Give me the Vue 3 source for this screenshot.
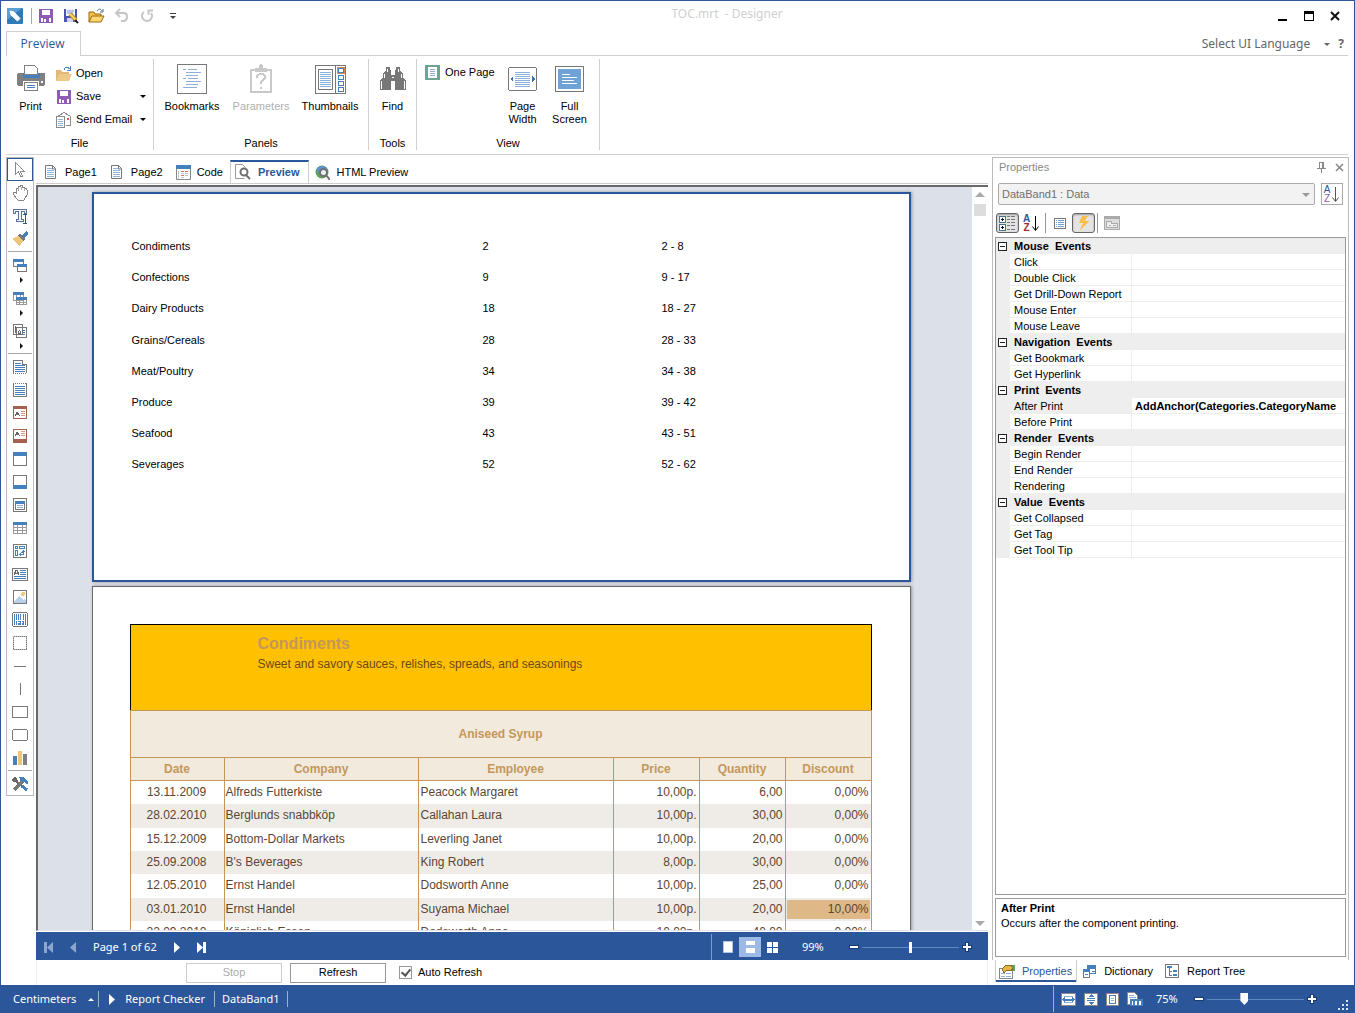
<script setup>
import { ref } from 'vue'

const icons = {
  app: '<rect width="16" height="16" rx="1" fill="#2f7bb8"/><path d="M0 1q0-1 1-1h14L0 12z" fill="#5a9fd4"/><path d="M3 3l4 1 6 6.500-2.500 2.500L4 7z" fill="#fff" stroke="#fff" stroke-linejoin="round"/>',
  save: '<path d="M1 1h14v14H1z" fill="#8e5bb5"/><path d="M4 2h8v5H4z" fill="#fff"/><path d="M3 10h10v4H3z" fill="#fff"/><path d="M5 10h6v4H5z" fill="#8e5bb5"/><path d="M6 11h2v3H6z" fill="#fff"/>',
  saveAs: '<path d="M1 1h13v13H1z" fill="#4b53b8"/><path d="M3 1h9v7H3z" fill="#eef2ff"/><path d="M4 3h7M4 5h6" stroke="#8b94c9"/><path d="M4 10h6v4H4z" fill="#cfd4ee"/><path d="M7 6l6 6" stroke="#b58a1c" stroke-width="4"/><path d="M7 6l6 6" stroke="#ffd75a" stroke-width="2"/><path d="M12 12l3 3" stroke="#222" stroke-width="2"/>',
  openGold: '<path d="M1 14V4h5l1 2h6v3" fill="#f3c14c" stroke="#9a6b14"/><path d="M1 14l3-6h12l-3 6z" fill="#ffd874" stroke="#9a6b14"/><path d="M9 3c2-3 4-2 5 0M15 1v3h-3" fill="none" stroke="#4a6f96"/>',
  open: '<path d="M0 15V4h5l1 2h7v3H4z" fill="#e0b878"/><path d="M3 8h13l-3 7H0z" fill="#edc987"/><path d="M8 3.500C9 .5 12 .5 13.500 3M14.500 0v4h-4" fill="none" stroke="#4a83bd"/>',
  undo: '<path d="M6 1L2 5l4 4M2 5h8c4 0 4 7 0 8H7" fill="none" stroke="#c6c6c6" stroke-width="2"/>',
  redo: '<path d="M5 4a5 5 0 1 0 7 1M14 2.500H9.500V7" fill="none" stroke="#c6c6c6" stroke-width="2"/>',
  email: '<path d="M1.500 15.500v-11L8 .5l6.500 4v9h-5" fill="#fff" stroke="#8a8a8a"/><path d="M.5 4.500h8v11h-8z" fill="#fff" stroke="#8a8a8a"/><path d="M2 7.500h5M2 9.500h5M2 11.500h5M2 13.500h5" stroke="#8fb4dc"/><path d="M11 6h2v2h-2z" fill="#e0583a"/>',
  print: '<path d="M0 10q0-2 2-2h24q2 0 2 2v9l-1 2H1l-1-2z" fill="#808080"/><path d="M6 8h17v5H6z" fill="#4580bc"/><path d="M7.500.500h10l3 3v6h-13z" fill="#fff" stroke="#808080"/><path d="M6 16h16v5H6z" fill="#fff"/><path d="M7.500 17.500h13v8h-13z" fill="#fff" stroke="#808080"/><path d="M10 20.500h8M10 22.500h8" stroke="#4580bc"/><path d="M24 16h2v2h-2z" fill="#fff"/>',
  bookmarks: '<path d="M.5.500h29v29H.500z" fill="#fff" stroke="#777"/><path d="M6 5.500h3M9 8.500h15M9 11.500h12M6 14.500h3M9 17.500h15M9 20.500h12M6 23.500h14M11 5.500h9M11 14.500h10" stroke="#8fb0da"/>',
  parameters: '<path d="M4 5h22v24H4z" fill="#c9c9c9"/><path d="M6 7h18v20H6z" fill="#fff"/><path d="M9 4h4q0-4 2-4t2 4h4v4H9z" fill="#c9c9c9"/><path d="M11 14q0-4 4-4t4 3q0 2-2 3t-2 4M15 23v2" fill="none" stroke="#c9c9c9" stroke-width="2"/>',
  thumbnails: '<path d="M.5.500h30v28H.500z" fill="#fff" stroke="#777"/><path d="M20.500 0v29M3.500 4.500h14v20h-14z" fill="none" stroke="#777"/><path d="M5 7.500h11M5 9.500h11M5 11.500h11M5 13.500h11M5 15.500h11M5 17.500h11M5 19.500h11M5 21.500h11" stroke="#8fb0da"/><path d="M23.500 3.500h5v4h-5zM23.500 10.500h5v4h-5zM23.500 16.500h5v4h-5zM23.500 22.500h5v4h-5z" fill="#fff" stroke="#4580bc"/><path d="M22.500 2.500h7v6h-7z" fill="none" stroke="#e08a4a"/>',
  find: '<path d="M6 1h4v3h1v5h4V4h1V1h4v3l3 4v4l3 2v10H15v-9h-4v9H0V14l3-2V8l3-4z" fill="#777"/><path d="M1.500 15v8M24.500 15v8M4.500 8v4M21.500 8v4M12 11.500h2M7.500 3v3M18.500 3v3" stroke="#fff"/>',
  onePage: '<rect width="15" height="15" rx="1" fill="#6fa393"/><path d="M3 2h9v11H3z" fill="#fff"/><path d="M5 4.500h5M5 6.500h5M5 8.500h5M5 10.500h5" stroke="#8fb0da"/>',
  pageWidth: '<rect x=".5" y=".5" width="28" height="23" rx="2" fill="#fff" stroke="#777"/><path d="M7 5.500h15M7 7.500h15M7 9.500h15M7 11.500h15M7 13.500h15M7 15.500h15M7 17.500h15M7 19.500h15" stroke="#8fb0da"/><path d="M5 9v6l-3-3zM24 9v6l3-3z" fill="#3a73b5"/>',
  fullScreen: '<path d="M.5.500h28v25H.500z" fill="#fff" stroke="#777"/><path d="M3 3h23v20H3z" fill="#6fa3d8"/><path d="M7 8.500h8M7 11.500h15M7 14.500h12M7 17.500h15" stroke="#fff"/>',
  page: '<path d="M.5.500h7l3 3v10H.500z" fill="#fff" stroke="#777"/><path d="M7.500 0v4h3" fill="none" stroke="#777"/><path d="M2 3.500h5M2 5.500h7M2 7.500h7M2 9.500h7M2 11.500h7" stroke="#8fb4dc"/>',
  code: '<path d="M.5.500h14v14H.500z" fill="#fff" stroke="#888"/><path d="M0 0h15v4H0z" fill="#4580bc"/><path d="M5 6.500h3M9 6.500h3M5 10.500h3" stroke="#e07050"/><path d="M5 8.500h3M9 10.500h3M5 12.500h3M9 8.500h3" stroke="#b9c7d8"/><path d="M2.500 6v8" stroke="#b9c7d8"/>',
  preview: '<path d="M9.500 14.500h-9V.5h7l3 3" fill="none" stroke="#999"/><circle cx="9" cy="8" r="3.500" fill="#fff" stroke="#707070" stroke-width="2"/><path d="M11 11l4 4" stroke="#707070" stroke-width="2"/>',
  html: '<circle cx="7" cy="7" r="6.500" fill="#5fa05a"/><path d="M2 3q5-4 10 0l1 4-5 3q-4-4-6-3z" fill="#5b93cf"/><circle cx="8.500" cy="7.500" r="3.500" fill="#eaf3fb" stroke="#707070" stroke-width="2"/><path d="M11 10l4 5" stroke="#707070" stroke-width="2"/>',
  cursor: '<path d="M3.500.500v12l3-3 2 5h2l-2-5h4z" fill="#fff" stroke="#888"/>',
  hand: '<path d="M5 14L1 9V7h2l1 1V3h2V1h2V0h2v2h2v1h2l1 2v5l-3 5H6z" fill="#fff" stroke="#888"/><path d="M6.500 3v3M9.500 2v3M12.500 3v3" stroke="#aaa"/>',
  text: '<path d="M1 1h13v4h-2V3H9v8h2v2H4v-2h2V3H3v2H1z" fill="#eef3fa" stroke="#5a7396"/><path d="M11 6.500h4M13.500 6v9M11 15.500h4" stroke="#33558a" fill="none"/>',
  brush: '<path d="M0 8l6-3 5 5-3 5z" fill="#edc678"/><path d="M6 4l2-1 5 5-1 3z" fill="#777"/><path d="M10 4l4-4 2 1v2l-4 4z" fill="#4580bc"/>',
  windows: '<path d="M1.500 2.500h10v7h-10zM5.500 7.500h9v7h-9z" fill="#fff" stroke="#777"/><path d="M1 2h11v3H1zM5 7h10v3H5z" fill="#4580bc"/>',
  grids: '<path d="M1.500 2.500h10v8h-10zM4.500 7.500h10v7h-10z" fill="#fff" stroke="#999"/><path d="M1 2h11v3H1zM4 7h11v3H4z" fill="#4580bc"/><path d="M7.500 10v4M11.500 10v4M4 12.500h10M4.500 5v2M8.500 5v2" stroke="#999"/>',
  copies: '<path d="M1.500 1.500h9v10h-9zM4.500 4.500h10v10h-10z" fill="#fff" stroke="#777"/><path d="M6.500 12V8.500l1-1 1 1V12M6 10.500h3M3.500 3v7" fill="none" stroke="#666"/><path d="M10 7.500h3M10 9.500h3M10 11.500h3" stroke="#4580bc"/>',
  reportTitle: '<path d="M1.500 14V1.500h9l4 4V14" fill="#fff" stroke="#777"/><path d="M3 4h6v1H3zM3 6h10v1H3zM3 8h10v1H3zM3 10h10v1H3zM3 12h10v1H3z" fill="#4580bc"/><path d="M10.500 1v4.500h4" fill="#fff" stroke="#777"/><path d="M1 14.500h14" stroke="#777" stroke-dasharray="1 1"/>',
  reportSummary: '<path d="M1.500 1v13.500h13V1" fill="#fff" stroke="#777"/><path d="M3 4.500h10M3 6.500h10M3 8.500h10M3 10.500h10M3 12.500h10" stroke="#4580bc"/><path d="M1 1.500h14" stroke="#777" stroke-dasharray="1 1"/>',
  headerA: '<path d="M1.500 1.500h13v12h-13z" fill="#fff" stroke="#a5604f"/><path d="M1 1h14v3H1z" fill="#a5604f"/><path d="M3 11l2-4 3 4M4 9.500h3" fill="none" stroke="#666"/><path d="M9 6.500h4M9 8.500h4M9 10.500h4" stroke="#d9998b"/>',
  footerA: '<path d="M1.500 1.500h13v12h-13z" fill="#fff" stroke="#a5604f"/><path d="M1 11h14v4H1z" fill="#a5604f"/><path d="M3 8l2-4 3 4M4 6.500h3" fill="none" stroke="#666"/><path d="M9 3.500h4M9 5.500h4M9 7.500h4" stroke="#d9998b"/>',
  header: '<path d="M1.500 1.500h13v13h-13z" fill="#fff" stroke="#777"/><path d="M1 1h14v4H1z" fill="#4580bc"/>',
  footer: '<path d="M1.500 1.500h13v13h-13z" fill="#fff" stroke="#777"/><path d="M1 11h14v4H1z" fill="#4580bc"/>',
  dataBand: '<path d="M1.500 1.500h13v13h-13z" fill="#fff" stroke="#777"/><path d="M3.500 4.500h9v8h-9z" fill="#fff" stroke="#777"/><path d="M3 4h10v3H3z" fill="#4580bc"/><path d="M5 8.500h6M5 10.500h6" stroke="#8fb0da"/>',
  table: '<path d="M1.500 2.500h13v11h-13zM5.500 3v11M10.500 3v11M1 7.500h13M1 10.500h13" fill="#fff" stroke="#999"/><path d="M1 2h14v3H1z" fill="#4580bc"/>',
  crossTab: '<path d="M1.500 1.500h13v13h-13z" fill="#fff" stroke="#777"/><path d="M3.500 3.500h2v2h-2zM7.500 3.500h5v2h-5zM3.500 7.500h2v5h-2zM8 11.500h3.500V8M10 9.500l1.500-2 2 2M9.500 9.500l-2 2 2 2" fill="none" stroke="#4580bc"/>',
  richText: '<path d="M.5 2.500h15v12H.5z" fill="#fff" stroke="#777"/><path d="M2 9l2-5h1l2 5M3 7.500h3" fill="none" stroke="#666"/><path d="M8 4.500h6M8 6.500h6M8 8.500h6M2 10.500h12M2 12.500h12" stroke="#4580bc"/>',
  image: '<path d="M1.500 1.500h13v13h-13z" fill="#fff" stroke="#777"/><path d="M2 14v-2l5-5 4 4 1-1 2 2v2z" fill="#b9cfea"/><circle cx="11" cy="5" r="2" fill="#f0c878"/>',
  barcode: '<rect x=".5" y=".5" width="15" height="14" rx="2" fill="#fff" stroke="#777"/><path d="M2.500 2v11M4.500 2v6M6.500 2v6M8.500 2v6M11.500 2v6M13.500 2v11" stroke="#4580bc"/><path d="M4.500 9v4M6 9.500h2.500v1.500H6.500v1.500H9M10 9.500h1.500v3H10M10 11h2" fill="none" stroke="#4580bc"/>',
  panel: '<path d="M1.500 1.500h13v13h-13z" fill="#fff" stroke="#bbb"/><path d="M1.500 1.500h13v13h-13z" fill="none" stroke="#777" stroke-dasharray="1 1"/>',
  hline: '<path d="M2 8.500h12" stroke="#777"/>',
  vline: '<path d="M8.500 2v12" stroke="#777"/>',
  rect: '<path d="M.5 2.500h15v11H.5z" fill="#fff" stroke="#777"/>',
  roundRect: '<rect x=".5" y="2.500" width="15" height="11" rx="2" fill="#fff" stroke="#777"/>',
  chart: '<path d="M1 6h4v9H1z" fill="#4580bc"/><path d="M6 1h4v14H6z" fill="#edc678"/><path d="M11 4h4v11h-4z" fill="#808080"/>',
  tools: '<path d="M2 3l12 11" stroke="#666" stroke-width="2"/><path d="M2 14L11 5" stroke="#777" stroke-width="3"/><path d="M7 1h5l4 5v2h-2l-2-3-3 1z" fill="#4580bc"/><path d="M10 10l5 4" stroke="#4580bc" stroke-width="3"/><path d="M0 3l2-2 3 1 1 3-2 1H1z" fill="#666"/>',
  sort: '<path d="M4.500 1v14M1.500 11.500l3 4 3-4" fill="none" stroke="currentColor"/>',
  pin: '<path d="M2.500 0v6M2 .5h5M0 6.500h9M4.500 7v4" stroke="#888" fill="none"/><path d="M5 0h2v6H5z" fill="#888"/>',
  closeSmall: '<path d="M1 1l7 7M8 1L1 8" stroke="#888" stroke-width="1.500"/>',
  categories: '<path d="M.5 1.500h6v6h-6zM.5 9.500h6v6h-6z" fill="#fff" stroke="#4d6f9c"/><path d="M2 4.500h3M3.500 3v3M2 12.500h3M3.500 11v3" stroke="#111"/><path d="M8 1.500h3M12 1.500h4M8 4.500h3M12 4.500h4M8 7.500h3M12 7.500h4M8 10.500h3M12 10.500h4M8 14.500h3M12 14.500h4" stroke="#777"/>',
  list: '<path d="M.5.500h11v10H.500z" fill="#fff" stroke="#777"/><path d="M2 2.500h1M2 4.500h1M2 6.500h1M2 8.500h1M4 2.500h6M4 4.500h6M4 6.500h6M4 8.500h6" stroke="#6fa3d8"/>',
  bolt: '<path d="M6 0h6L9 5h4L4 14l3-7H3z" fill="#f9c04e"/>',
  form: '<path d="M.5.500h15v13H.500z" fill="#ddd" stroke="#aaa"/><path d="M0 0h16v3H0z" fill="#aaa"/><path d="M2.500 5.500h5v2h6v4h-11z" fill="#eee" stroke="#aaa"/><path d="M5 9.500h2M9 9.500h3" stroke="#aaa"/>',
  propsTab: '<path d="M.5 4.500h13v10H.5z" fill="#fff" stroke="#888"/><path d="M2 9.500h4M7 9.500h5M2 12.500h4M7 12.500h5" stroke="#8fb0da"/><path d="M3 5l4-4h5l2 3-2 3-4-1-3 3z" fill="#e3b548" stroke="#8a6a1c"/><path d="M13 1h3v6h-2z" fill="#5fa05a"/>',
  dictTab: '<path d="M4.500.500h8v8h-8z" fill="#fff" stroke="#4580bc"/><path d="M4 0h9v4H4z" fill="#4580bc"/><path d="M.5 5.500h6v7h-6z" fill="#fff" stroke="#777"/><path d="M0 4h7v3H0z" fill="#4580bc"/><path d="M9 6.500h3M2 9.500h3" stroke="#4580bc"/>',
  treeTab: '<path d="M.5.500h13v13H.500z" fill="#fff" stroke="#777"/><path d="M4.500 3v8M4 7.500h3M4 11.500h3" fill="none" stroke="#4580bc"/><path d="M8 6h4v2H8zM8 10h4v2H8zM2 2h5v2H2z" fill="#4580bc"/>',
  first: '<path d="M0 0h3v11H0zM9 0v11L3 5.500z" fill="currentColor"/>',
  prev: '<path d="M6 0v11L0 5.500z" fill="currentColor"/>',
  next: '<path d="M0 0v11l6-5.500z" fill="currentColor"/>',
  last: '<path d="M6 0h3v11H6zM0 0v11l6-5.500z" fill="currentColor"/>',
  single: '<path d="M.5.500h9v11H.500z" fill="#fff" stroke="#b5c6e0"/>',
  continuous: '<path d="M0 0h9v4H0zM0 7h9v5H0z" fill="#fff"/>',
  multiple: '<path d="M0 0h5v5H0zM6 0h5v5H6zM0 6h5v5H0zM6 6h5v5H6z" fill="#fff"/>',
  minus: '<path d="M0 3h10v4H0z" fill="#1b3c70"/><path d="M1 4h8v2H1z" fill="#fff"/>',
  plus: '<path d="M3 0h4v3h3v4H7v3H3V7H0V3h3z" fill="#1b3c70"/><path d="M4 1h2v3h3v2H6v3H4V6H1V4h3z" fill="#fff"/>',
  fitWidth: '<path d="M.5.500h14v12H.500z" fill="#fff" stroke="#8a8a8a"/><path d="M3 3.500h9M3 9.500h9" stroke="#8fb0da"/><path d="M1 6.500l3-3v2h7v-2l3 3-3 3v-2H4v2z" fill="#4580bc"/>',
  fitHeight: '<path d="M.5.500h13v12H.500z" fill="#fff" stroke="#8a8a8a"/><path d="M3 5.500h8M3 7.500h8" stroke="#4580bc"/><path d="M4 4l3-3 3 3zM4 9l3 3 3-3z" fill="#4580bc"/>',
  fitPage: '<path d="M.5.500h12v12H.500z" fill="#fff" stroke="#8a8a8a"/><path d="M3.500 2.500h6v8h-6z" fill="#fff" stroke="#4580bc"/><path d="M5 5.500h3M5 7.500h3" stroke="#8fb0da"/>',
  fitHundred: '<path d="M.5 12.500V.5h7l3 3v9z" fill="#fff" stroke="#8a8a8a"/><path d="M2 3.500h5M2 5.500h7" stroke="#8fb0da"/><path d="M3 7h13v7H3z" fill="#4580bc"/><path d="M5.500 9v4M8.500 9.500h1v3h-1zM12.500 9.500h1v3h-1z" fill="none" stroke="#fff"/>'
}

const tools = [
  ['cursor', 'hand', 'text', 'brush'],
  ['windows', 'grids', 'copies'],
  ['reportTitle', 'reportSummary', 'headerA', 'footerA', 'header', 'footer', 'dataBand', 'table', 'crossTab', 'richText', 'image', 'barcode', 'panel', 'hline', 'vline', 'rect', 'roundRect', 'chart'],
  ['tools']
]

const docTabs = [
  { label: 'Page1', icon: 'page', w: 11, h: 14 },
  { label: 'Page2', icon: 'page', w: 11, h: 14 },
  { label: 'Code', icon: 'code', w: 15, h: 15 },
  { label: 'Preview', icon: 'preview', w: 16, h: 16 },
  { label: 'HTML Preview', icon: 'html', w: 15, h: 15 }
]

const toc = [
  ['Condiments', '2', '2 - 8'],
  ['Confections', '9', '9 - 17'],
  ['Dairy Products', '18', '18 - 27'],
  ['Grains/Cereals', '28', '28 - 33'],
  ['Meat/Poultry', '34', '34 - 38'],
  ['Produce', '39', '39 - 42'],
  ['Seafood', '43', '43 - 51'],
  ['Severages', '52', '52 - 62']
]

const orders = [
  ['13.11.2009', 'Alfreds Futterkiste', 'Peacock Margaret', '10,00p.', '6,00', '0,00%'],
  ['28.02.2010', 'Berglunds snabbköp', 'Callahan Laura', '10,00p.', '30,00', '0,00%'],
  ['15.12.2009', 'Bottom-Dollar Markets', 'Leverling Janet', '10,00p.', '20,00', '0,00%'],
  ['25.09.2008', "B's Beverages", 'King Robert', '8,00p.', '30,00', '0,00%'],
  ['12.05.2010', 'Ernst Handel', 'Dodsworth Anne', '10,00p.', '25,00', '0,00%'],
  ['03.01.2010', 'Ernst Handel', 'Suyama Michael', '10,00p.', '20,00', '10,00%'],
  ['22.09.2010', 'Königlich Essen', 'Dodsworth Anne', '10,00p.', '40,00', '0,00%']
]

const events = [
  { title: 'Mouse  Events', rows: ['Click', 'Double Click', 'Get Drill-Down Report', 'Mouse Enter', 'Mouse Leave'] },
  { title: 'Navigation  Events', rows: ['Get Bookmark', 'Get Hyperlink'] },
  { title: 'Print  Events', rows: ['After Print', 'Before Print'] },
  { title: 'Render  Events', rows: ['Begin Render', 'End Render', 'Rendering'] },
  { title: 'Value  Events', rows: ['Get Collapsed', 'Get Tag', 'Get Tool Tip'] }
]
const values = { 'After Print': 'AddAnchor(Categories.CategoryName' }

const activeDoc = ref('Preview')
const autoRefresh = ref(true)
const previewZoom = ref(99)
const designZoom = ref(75)
</script>

<template>
  <div class="window">
    <header class="titlebar">
      <div class="quick">
        <svg class="logo" width="16" height="16" v-html="icons.app"></svg>
        <button aria-label="Save"><svg width="16" height="16" v-html="icons.save"></svg></button>
        <button aria-label="Save as"><svg width="16" height="16" v-html="icons.saveAs"></svg></button>
        <button aria-label="Open"><svg width="17" height="16" v-html="icons.openGold"></svg></button>
        <button aria-label="Undo"><svg width="16" height="16" v-html="icons.undo"></svg></button>
        <button aria-label="Redo"><svg width="16" height="16" v-html="icons.redo"></svg></button>
        <button aria-label="Customize"><svg width="6" height="6"><path d="M0 .5h6" stroke="#444" /><path d="M0 3h6L3 6z" fill="#444" /></svg></button>
      </div>
      <h1 class="caption">TOC.mrt&nbsp; - Designer</h1>
      <div class="controls">
        <button aria-label="Minimize"><svg width="10" height="10"><path d="M0 8h9v2H0z" /></svg></button>
        <button aria-label="Maximize"><svg width="10" height="10"><path d="M0 0h10v10H0zM1 3v6h8V3z" fill-rule="evenodd" /></svg></button>
        <button aria-label="Close"><svg class="smooth" width="10" height="10"><path d="M1 1l8 8M9 1L1 9" stroke="#111" stroke-width="2" /></svg></button>
      </div>
    </header>

    <nav class="ribbon-tabs">
      <button class="ribbon-tab">Preview</button>
      <div class="language">
        <button>Select UI Language <i class="down"></i></button>
        <button class="help" aria-label="Help">?</button>
      </div>
    </nav>

    <section class="ribbon">
      <div class="group file">
        <div class="items">
          <button class="big print"><span class="pic"><svg width="28" height="28" v-html="icons.print"></svg></span>Print</button>
          <div class="small-list">
            <button class="small"><svg width="16" height="16" v-html="icons.open"></svg>Open</button>
            <button class="small"><svg width="16" height="16" v-html="icons.save"></svg>Save<i class="down"></i></button>
            <button class="small"><svg width="16" height="16" v-html="icons.email"></svg>Send Email<i class="down"></i></button>
          </div>
        </div>
        <h2>File</h2>
      </div>
      <div class="group panels">
        <div class="items">
          <button class="big"><span class="pic"><svg width="30" height="30" v-html="icons.bookmarks"></svg></span>Bookmarks</button>
          <button class="big" disabled><span class="pic"><svg width="30" height="30" v-html="icons.parameters"></svg></span>Parameters</button>
          <button class="big"><span class="pic"><svg width="31" height="29" v-html="icons.thumbnails"></svg></span>Thumbnails</button>
        </div>
        <h2>Panels</h2>
      </div>
      <div class="group find">
        <div class="items">
          <button class="big"><span class="pic"><svg width="26" height="26" v-html="icons.find"></svg></span>Find</button>
        </div>
        <h2>Tools</h2>
      </div>
      <div class="group view">
        <div class="items">
          <button class="small one"><svg width="15" height="15" v-html="icons.onePage"></svg>One Page</button>
          <button class="big narrow"><span class="pic"><svg width="29" height="24" v-html="icons.pageWidth"></svg></span>Page Width</button>
          <button class="big narrow"><span class="pic"><svg width="29" height="26" v-html="icons.fullScreen"></svg></span>Full Screen</button>
        </div>
        <h2>View</h2>
      </div>
    </section>

    <main class="body">
      <aside class="toolbox">
        <template v-for="(set, i) in tools" :key="i">
          <hr v-if="i" />
          <template v-for="name in set" :key="name">
            <button class="tool" :class="{ active: name === 'cursor' }" :aria-label="name">
              <svg width="16" height="16" v-html="icons[name]"></svg>
            </button>
            <i v-if="i === 1" class="flyout"></i>
          </template>
        </template>
      </aside>

      <section class="document">
        <nav class="doc-tabs">
          <button v-for="t in docTabs" :key="t.label" :class="{ active: t.label === activeDoc }" @click="activeDoc = t.label">
            <svg :width="t.w" :height="t.h" v-html="icons[t.icon]"></svg>{{ t.label }}
          </button>
        </nav>
        <div class="viewer">
          <div class="canvas">
            <article class="paper current">
              <table class="toc">
                <tbody>
                  <tr v-for="r in toc" :key="r[0]"><td v-for="c in r" :key="c">{{ c }}</td></tr>
                </tbody>
              </table>
            </article>
            <article class="paper">
              <div class="category">
                <h3>Condiments</h3>
                <p>Sweet and savory sauces, relishes, spreads, and seasonings</p>
              </div>
              <div class="product">Aniseed Syrup</div>
              <table class="orders">
                <colgroup>
                  <col class="c-date" />
                  <col class="c-company" />
                  <col class="c-name" />
                  <col class="c-num" span="3" />
                </colgroup>
                <thead>
                  <tr><th>Date</th><th>Company</th><th>Employee</th><th>Price</th><th>Quantity</th><th>Discount</th></tr>
                </thead>
                <tbody>
                  <tr v-for="(r, i) in orders" :key="i">
                    <td v-for="(c, j) in r" :key="j"><span :class="{ mark: c === '10,00%' }">{{ c }}</span></td>
                  </tr>
                </tbody>
              </table>
            </article>
          </div>
          <div class="scroll" aria-hidden="true"><i class="up"></i><b></b><i class="dn"></i></div>
        </div>
        <div class="pager">
          <button class="off" aria-label="First page"><svg width="9" height="11" v-html="icons.first"></svg></button>
          <button class="off" aria-label="Previous page"><svg width="6" height="11" v-html="icons.prev"></svg></button>
          <span>Page 1 of 62</span>
          <button aria-label="Next page"><svg width="6" height="11" v-html="icons.next"></svg></button>
          <button aria-label="Last page"><svg width="9" height="11" v-html="icons.last"></svg></button>
          <div class="modes">
            <button aria-label="Single page"><svg width="10" height="12" v-html="icons.single"></svg></button>
            <button class="on" aria-label="Continuous"><svg width="9" height="12" v-html="icons.continuous"></svg></button>
            <button aria-label="Multiple pages"><svg width="11" height="11" v-html="icons.multiple"></svg></button>
          </div>
          <output class="percent">{{ previewZoom }}%</output>
          <div class="zoom">
            <button aria-label="Zoom out"><svg width="10" height="10" v-html="icons.minus"></svg></button>
            <input v-model="previewZoom" type="range" min="0" max="198" aria-label="Preview zoom" />
            <button aria-label="Zoom in"><svg width="10" height="10" v-html="icons.plus"></svg></button>
          </div>
        </div>
        <div class="refresh">
          <button disabled>Stop</button>
          <button>Refresh</button>
          <label><input v-model="autoRefresh" type="checkbox" />Auto Refresh</label>
        </div>
      </section>

      <aside class="side">
        <div class="panel">
          <div class="panel-title">
            <h2>Properties</h2>
            <button aria-label="Pin"><svg width="9" height="11" v-html="icons.pin"></svg></button>
            <button aria-label="Close panel"><svg class="smooth" width="9" height="9" v-html="icons.closeSmall"></svg></button>
          </div>
          <div class="picker">
            <div class="combo">
              <select aria-label="Component"><option>DataBand1 : Data</option></select>
              <i class="down"></i>
            </div>
            <button class="az pale" aria-label="Sort components"><span><b>A</b><b>Z</b></span><svg class="smooth" width="9" height="17" v-html="icons.sort"></svg></button>
          </div>
          <div class="prop-tools">
            <button class="pressed" aria-label="Categorized"><svg width="17" height="16" v-html="icons.categories"></svg></button>
            <button class="az" aria-label="Alphabetical"><span><b>A</b><b>Z</b></span><svg class="smooth" width="9" height="17" v-html="icons.sort"></svg></button>
            <i class="bar"></i>
            <button aria-label="Properties list"><svg width="12" height="11" v-html="icons.list"></svg></button>
            <button class="pressed" aria-label="Events"><svg width="16" height="14" v-html="icons.bolt"></svg></button>
            <i class="bar"></i>
            <button aria-label="Property pages"><svg width="16" height="14" v-html="icons.form"></svg></button>
          </div>
          <div class="grid">
            <table>
              <colgroup><col class="g-mark" /><col class="g-name" /><col /></colgroup>
              <tbody v-for="g in events" :key="g.title">
                <tr class="cat">
                  <td><svg width="9" height="9"><path d="M.5.5h8v8h-8z" fill="#fff" stroke="#222" /><path d="M2 4.500h5" stroke="#222" /></svg></td>
                  <th colspan="2">{{ g.title }}</th>
                </tr>
                <tr v-for="r in g.rows" :key="r" :class="{ selected: values[r] }">
                  <td></td><td>{{ r }}</td><td>{{ values[r] }}</td>
                </tr>
              </tbody>
            </table>
          </div>
          <div class="hint">
            <strong>After Print</strong>
            <p>Occurs after the component printing.</p>
          </div>
        </div>
        <nav class="side-tabs">
          <button class="active"><svg width="16" height="15" v-html="icons.propsTab"></svg>Properties</button>
          <button><svg width="13" height="13" v-html="icons.dictTab"></svg>Dictionary</button>
          <button><svg width="14" height="14" v-html="icons.treeTab"></svg>Report Tree</button>
        </nav>
      </aside>
    </main>

    <footer class="status">
      <button class="units">Centimeters<i class="caret"></i></button>
      <button class="checker"><svg width="6" height="11" v-html="icons.next"></svg>Report Checker</button>
      <span class="where">DataBand1</span>
      <div class="fits">
        <button aria-label="Fit width"><svg width="15" height="13" v-html="icons.fitWidth"></svg></button>
        <button aria-label="Fit height"><svg width="14" height="13" v-html="icons.fitHeight"></svg></button>
        <button aria-label="Fit page"><svg width="13" height="13" v-html="icons.fitPage"></svg></button>
        <button aria-label="Actual size"><svg width="16" height="14" v-html="icons.fitHundred"></svg></button>
      </div>
      <output class="percent">{{ designZoom }}%</output>
      <div class="zoom design">
        <button aria-label="Zoom out"><svg width="10" height="10" v-html="icons.minus"></svg></button>
        <input v-model="designZoom" type="range" min="0" max="200" aria-label="Designer zoom" />
        <button aria-label="Zoom in"><svg width="10" height="10" v-html="icons.plus"></svg></button>
      </div>
      <svg class="grip" width="12" height="12"><path d="M9 0h2v2H9zM5 4h2v2H5zM9 4h2v2H9zM1 8h2v2H1zM5 8h2v2H5zM9 8h2v2H9z" fill="#dfe4ec" /></svg>
    </footer>
  </div>
</template>

<style>
body { margin: 0; }
</style>

<style scoped>
* { box-sizing: border-box; }
button { padding: 0; border: 0; background: none; font: inherit; color: inherit; display: flex; align-items: center; justify-content: center; }
h1, h2, h3, p { margin: 0; font: inherit; }
svg { flex: none; display: block; shape-rendering: crispEdges; }
svg.smooth { shape-rendering: auto; }
i { flex: none; display: block; }
.down { width: 0; height: 0; border: 3px solid transparent; border-top-color: currentColor; border-bottom: 0; }

.window {
  height: 100vh; display: flex; flex-direction: column; overflow: hidden;
  border: 1px solid #2b579a; border-bottom: 0; background: #fff; color: #000;
  font: 11px/13px "Liberation Sans", Arial, sans-serif;
}

.titlebar { flex: none; height: 30px; display: flex; align-items: center; padding: 0 14px 0 6px; }
.quick { display: flex; align-items: center; gap: 9px; }
.quick .logo { margin-right: 5px; shape-rendering: auto; }
.quick button:nth-of-type(1) { border-left: 1px solid #aaa; padding-left: 6px; margin-left: -6px; }
.quick button:last-child { margin-left: 6px; }
.quick svg { shape-rendering: auto; }
.quick button:nth-of-type(1) svg { shape-rendering: crispEdges; }
.caption { flex: 1; text-align: center; font: 12px/16px "Noto Sans", "Open Sans", sans-serif; color: #cfcfcf; padding-bottom: 4px; }
.controls { display: flex; gap: 16px; }

.ribbon-tabs { flex: none; height: 25px; margin: 0 6px 0 5px; border-bottom: 1px solid #d0d0d0; display: flex; justify-content: space-between; }
.ribbon-tab { width: 75px; height: 25px; border: 1px solid #d0d0d0; border-bottom: 0; background: #fff; color: #2b579a; font: 12px/16px "Open Sans", "Noto Sans", sans-serif; padding-right: 2px; }
.language { display: flex; align-items: center; gap: 8px; padding: 2px 4px 0 0; color: #666; font: 12px/16px "Noto Sans", "Open Sans", sans-serif; }
.language .down { margin-left: 14px; }
.help { font-weight: 700; }

.ribbon { flex: none; height: 99px; margin: 0 6px 0 5px; border-bottom: 1px solid #d0d0d0; display: flex; }
.group { height: 91px; margin-top: 3px; border-right: 1px solid #d0d0d0; display: flex; flex-direction: column; justify-content: space-between; }
.items { display: flex; align-items: flex-start; justify-content: center; }
.group h2 { text-align: center; }
.file { width: 148px; }
.panels { width: 215px; }
.find { width: 48px; }
.view { width: 183px; }
.view .items { justify-content: flex-start; padding-left: 6px; }
.big { width: 69px; flex-direction: column; justify-content: flex-start; padding-top: 3px; }
.big:disabled { color: #b0b0b0; }
.print { width: 49px; }
.narrow { width: 47px; }
.pic { height: 34px; margin-bottom: 4px; display: flex; align-items: center; }
.small-list { width: 98px; padding-top: 3px; }
.small { width: 100%; height: 23px; justify-content: flex-start; gap: 4px; padding: 0 7px 0 1px; }
.small .down { margin-left: auto; }
.one { width: 76px; margin-top: 2px; padding: 0 0 0 2px; gap: 5px; }

.body { flex: 1; min-height: 0; display: flex; padding: 2px 5px 0; }
.toolbox { width: 28px; align-self: flex-start; border: 1px solid #bbb; display: flex; flex-direction: column; }
.tool { width: 26px; height: 23px; }
.tool.active { border: 1px solid #2b579a; }
.toolbox hr { width: 24px; height: 1px; margin: 1px; border: 0; background: #aaa; }
.flyout { height: 6px; width: 0; margin: 1px 0 3px 13px; border: 3px solid transparent; border-left-color: #111; border-right: 0; }

.document { flex: 1; min-width: 0; margin-left: 2px; display: flex; flex-direction: column; }
.doc-tabs { flex: none; height: 27px; padding-top: 3px; border-bottom: 1px solid #ccc; display: flex; }
.doc-tabs button { height: 24px; gap: 9px; padding: 0 5px 0 9px; }
.doc-tabs button:nth-child(3) { gap: 6px; padding: 0 7px 0 8px; }
.doc-tabs button:nth-child(5) { gap: 7px; padding-left: 6px; }
.doc-tabs .active { gap: 7px; padding: 0 8px 2px 4px; border: 1px solid #ccc; border-top: 2px solid #2b579a; border-bottom: 0; color: #2b579a; font-weight: 700; }
.doc-tabs svg { shape-rendering: auto; }
.viewer { flex: 1; min-height: 0; margin-top: 1px; border: 1px solid #696969; border-width: 2px 0 0 2px; border-bottom: 1px solid #e3e3e3; display: flex; }
.canvas { flex: 1; min-width: 0; overflow: hidden; background: #dce0e8; display: flex; flex-direction: column; align-items: center; gap: 4px; padding: 5px 8px 0 0; }
.paper { flex: none; width: 819px; height: 390px; padding: 37px 38px 37px 37px; background: #fff; border: 1px solid #696969; box-shadow: 1px 0 3px #999; }
.paper.current { border: 2px solid #2b579a; }
.toc { border-collapse: collapse; width: 100%; table-layout: fixed; }
.toc tr { height: 31px; }
.toc tr:nth-child(4) { height: 32px; }
.toc td { padding: 0 1px; }
.toc td:nth-child(1) { width: 351px; }
.toc td:nth-child(2) { width: 179px; }
.category { height: 86px; background: #ffc000; border: 1px solid #000; border-bottom: 0; padding: 9px 0 0 127px; color: #6b4a1a; font-size: 12px; line-height: 20px; }
.category h3 { font-size: 16px; font-weight: 700; color: #c4975a; }
.product { height: 47px; border: 1px solid #c4965a; border-bottom: 0; background: #f2eadd; color: #c4975a; font: 700 12px/46px "Liberation Sans", Arial, sans-serif; text-align: center; }
.orders { width: 742px; table-layout: fixed; border-collapse: collapse; font-size: 12px; line-height: 19px; color: #5c4532; }
.c-date { width: 94px; }
.c-company { width: 194px; }
.c-name { width: 195px; }
.c-num { width: 86px; }
.orders th { height: 23px; padding: 0; border: 1px solid #c4965a; background: #f2eadd; color: #c4975a; }
.orders td { height: 23px; padding: 0 1px; border: solid #c4965a; border-width: 0 1px; white-space: nowrap; }
.orders tr:nth-child(3n + 2) td { height: 24px; }
.orders tbody tr:nth-child(even) { background: #efece7; }
.orders td:first-child { text-align: center; }
.orders td:nth-child(3) { padding-left: 2px; }
.orders td:nth-child(n + 4) { text-align: right; }
.orders td span { display: block; padding-right: 1px; }
.mark { background: #deb887; }
.scroll { width: 16px; background: #fff; display: flex; flex-direction: column; align-items: center; padding: 5px 0 4px; }
.up { border: 5px solid transparent; border-bottom-color: #aaa; border-top: 0; }
.dn { border: 5px solid transparent; border-top-color: #aaa; border-bottom: 0; margin-top: auto; }
.scroll b { width: 12px; height: 12px; margin-top: 7px; background: #ddd; }

.pager { flex: none; height: 28px; margin-top: 1px; background: #2b579a; color: #fff; display: flex; align-items: center; padding: 2px 16px 0 8px; gap: 17px; font: 11px/16px "Noto Sans", "Open Sans", sans-serif; }
.pager svg, .checker svg { shape-rendering: auto; }
.off { color: #8ca6cf; }
.modes { margin-left: auto; height: 26px; border-left: 1px solid #7f9cc9; display: flex; align-items: center; padding-left: 5px; }
.modes button { width: 22px; height: 20px; }
.modes .on { background: #9db9e6; }
.percent { width: 24px; white-space: nowrap; }
.pager .percent { margin-left: 2px; }
.zoom { display: flex; align-items: center; gap: 3px; }
.pager .zoom { margin-left: 6px; }
.zoom input { width: 97px; height: 12px; margin: 0; appearance: none; background: linear-gradient(#6288c4, #6288c4) 0 6px / 100% 1px no-repeat; }
.zoom input::-webkit-slider-thumb { appearance: none; width: 3px; height: 11px; background: #fff; }

.refresh { flex: none; height: 25px; border: solid #eee; border-width: 0 1px; display: flex; align-items: center; gap: 8px; padding-left: 149px; }
.refresh button { width: 96px; height: 20px; border: 1px solid #999; background: #fff; }
.refresh button:disabled { color: #aaa; border-color: #ccc; }
.refresh label { display: flex; align-items: center; gap: 6px; margin-left: 5px; }
.refresh input { appearance: none; width: 13px; height: 13px; margin: 0; border: 1px solid #999; display: grid; place-items: center; }
.refresh input:checked::after { content: ""; width: 4px; height: 7px; margin-top: -2px; border: solid #555; border-width: 0 2px 2px 0; transform: rotate(40deg); }

.side { flex: none; width: 357px; margin-left: 4px; display: flex; flex-direction: column; }
.panel { flex: 1; min-height: 0; border: 1px solid #bbb; border-bottom: 0; padding: 0 2px 3px; display: flex; flex-direction: column; }
.panel-title { height: 18px; display: flex; align-items: center; gap: 9px; padding: 0 2px 0 4px; color: #888; }
.panel-title h2 { flex: 1; }
.picker { display: flex; gap: 6px; margin: 7px 3px 0; }
.combo { flex: 1; position: relative; }
.combo select { width: 100%; height: 22px; padding: 0 3px; appearance: none; border: 1px solid #aaa; border-radius: 2px; background: #f2f2f2; color: #707070; font: inherit; }
.combo .down { position: absolute; right: 5px; top: 10px; border-width: 4px 4px 0; color: #999; }
.az { width: 22px; height: 22px; gap: 1px; }
.az span { display: flex; flex-direction: column; font-size: 10px; line-height: 9px; }
.az b:first-child { color: #2b579a; }
.az b:last-child { color: #a03030; }
.pale { border: 1px solid #aaa; color: #555; }
.pale b:last-child { color: #8e5bb5; }
.pale b { font-weight: 400; }
.prop-tools { display: flex; align-items: center; height: 20px; margin: 8px 0 4px 1px; gap: 1px; }
.prop-tools button { width: 23px; height: 20px; }
.prop-tools .pressed { border: 1px solid #666; border-radius: 3px; background: #e4e4e4; box-shadow: inset 0 1px 2px #999; }
.bar { width: 1px; height: 20px; margin: 0 1px; background: #999; }
.grid { flex: 1; min-height: 0; border: 1px solid #999; overflow: hidden; }
.grid table { width: 100%; table-layout: fixed; border-collapse: separate; border-spacing: 0; }
.g-mark { width: 14px; }
.g-name { width: 122px; }
.grid td, .grid th { height: 16px; padding: 1px 0 0; white-space: pre; overflow: hidden; text-align: left; line-height: 14px; }
.grid td:nth-child(1) { background: #eee; }
.grid td:nth-child(2) { padding-left: 4px; border: solid #eee; border-width: 0 1px 1px 0; }
.grid td:nth-child(3) { padding-left: 3px; border-bottom: 1px solid #eee; font-weight: 700; }
.grid .cat td { padding: 0 0 0 2px; }
.grid .cat th { padding: 0 0 0 4px; background: #eee; }
.grid .selected td:nth-child(2) { background: #eee; }
.hint { height: 59px; margin-top: 3px; border: 1px solid #999; padding: 2px 5px; line-height: 15px; }
.side-tabs { flex: none; height: 25px; display: flex; padding: 0 0 3px 3px; }
.side-tabs button { gap: 8px; padding: 0 6px; }
.side-tabs .active { gap: 7px; padding: 0 4px 0 3px; border: solid #ccc; border-width: 0 1px; box-shadow: inset 0 -2px #2b579a; color: #2b579a; }

.status { flex: none; height: 28px; background: #2b579a; color: #fff; display: flex; align-items: center; padding: 0 5px 0 12px; font: 11px/16px "Noto Sans", "Open Sans", sans-serif; }
.units { border-right: 1px solid #9db0cf; gap: 12px; padding-right: 4px; }
.checker { border-right: 1px solid #9db0cf; gap: 10px; padding: 0 9px 0 10px; }
.where { border-right: 1px solid #9db0cf; padding: 0 8px 0 7px; }
.caret { border: 3px solid transparent; border-bottom-color: #fff; border-top: 0; }
.fits { margin-left: auto; height: 26px; border-left: 1px solid #9db0cf; display: flex; align-items: center; gap: 8px; padding: 0 13px 0 7px; }
.design { margin-left: 14px; }
.design input::-webkit-slider-thumb { width: 8px; height: 12px; clip-path: polygon(0 0, 100% 0, 100% 65%, 50% 100%, 0 65%); }
.grip { margin: 13px 0 0 20px; }
</style>
